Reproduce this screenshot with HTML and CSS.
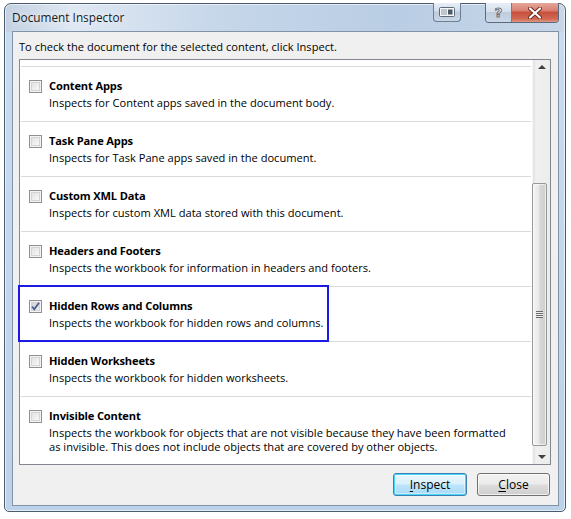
FILE: index.html
```html
<!DOCTYPE html>
<html>
<head>
<meta charset="utf-8">
<link rel="stylesheet" href="styles.css">
</head>
<body>
<div class="window">
  <div class="titlebar">
    <div class="title">Document Inspector</div>
    <div class="tb-btn tb-mode">
      <svg width="16" height="10" viewBox="0 0 16 10">
        <rect x="0.5" y="0.5" width="15" height="9" rx="1" fill="#f4f6f8" stroke="#5f6b78"/>
        <line x1="3" y1="2" x2="3" y2="8" stroke="#8a95a2"/>
        <line x1="5" y1="2" x2="5" y2="8" stroke="#8a95a2"/>
        <line x1="7" y1="2" x2="7" y2="8" stroke="#8a95a2"/>
        <rect x="9" y="2.5" width="4.5" height="5" fill="#4d5866"/>
      </svg>
    </div>
    <div class="tb-group">
      <div class="tb-btn tb-help">?</div>
      <div class="tb-btn tb-close">
        <svg width="14" height="12" viewBox="0 0 14 12">
          <path d="M2 1.5 L12 10.5 M12 1.5 L2 10.5" stroke="#6b2a22" stroke-width="4" stroke-linecap="round"/>
          <path d="M2 1.5 L12 10.5 M12 1.5 L2 10.5" stroke="#ffffff" stroke-width="2.2" stroke-linecap="round"/>
        </svg>
      </div>
    </div>
  </div>
  <div class="client">
    <div class="intro">To check the document for the selected content, click Inspect.</div>
    <div class="listbox">
      <div class="list-content">
        <div class="item">
          <span class="cb"></span>
          <span class="it-title">Content Apps</span>
          <span class="it-desc">Inspects for Content apps saved in the document body.</span>
        </div>
        <div class="item">
          <span class="cb"></span>
          <span class="it-title">Task Pane Apps</span>
          <span class="it-desc">Inspects for Task Pane apps saved in the document.</span>
        </div>
        <div class="item">
          <span class="cb"></span>
          <span class="it-title">Custom XML Data</span>
          <span class="it-desc">Inspects for custom XML data stored with this document.</span>
        </div>
        <div class="item">
          <span class="cb"></span>
          <span class="it-title">Headers and Footers</span>
          <span class="it-desc">Inspects the workbook for information in headers and footers.</span>
        </div>
        <div class="item">
          <span class="cb checked">
            <svg width="11" height="11" viewBox="0 0 11 11"><path d="M2 5.5 L4.3 8.3 L9 1.8" fill="none" stroke="#4a5d8c" stroke-width="1.8"/></svg>
          </span>
          <span class="it-title">Hidden Rows and Columns</span>
          <span class="it-desc">Inspects the workbook for hidden rows and columns.</span>
        </div>
        <div class="item">
          <span class="cb"></span>
          <span class="it-title">Hidden Worksheets</span>
          <span class="it-desc">Inspects the workbook for hidden worksheets.</span>
        </div>
        <div class="item">
          <span class="cb"></span>
          <span class="it-title">Invisible Content</span>
          <span class="it-desc">Inspects the workbook for objects that are not visible because they have been formatted as invisible. This does not include objects that are covered by other objects.</span>
        </div>
      </div>
      <div class="scrollbar">
        <div class="sb-btn"><span class="arrow-up"></span></div>
        <div class="sb-track">
          <div class="sb-thumb">
            <span class="grip"></span>
          </div>
        </div>
        <div class="sb-btn"><span class="arrow-down"></span></div>
      </div>
      <div class="highlight"></div>
    </div>
    <div class="buttons">
      <div class="btn default"><u>I</u>nspect</div>
      <div class="btn"><u>C</u>lose</div>
    </div>
  </div>
</div>
</body>
</html>
```
FILE: styles.css
```css
html, body {
  margin: 0;
  padding: 0;
  background: #ffffff;
}
body {
  font-family: "Open Sans", "Noto Sans", "DejaVu Sans", sans-serif;
  font-size: 11.1px;
  color: #000;
}
.window {
  margin: 3px 0 0 4px;
  width: 562px;
  height: 509px;
  box-sizing: border-box;
  border: 1px solid #4b5a6e;
  border-radius: 7px 7px 5px 5px;
  padding: 0 6px 5px 7px;
  background:
    linear-gradient(180deg, rgba(255,255,255,0) 0px, rgba(255,255,255,0) 28px, #c9dbef 28px, #bcd2ea 100%),
    linear-gradient(90deg, #c3d1e2 0%, #dfe8f3 12%, #c5d6e9 40%, #b9cde4 70%, #c8d7e8 100%);
  display: flex;
  flex-direction: column;
  box-shadow: inset 0 0 0 1px rgba(255,255,255,0.6);
}
.titlebar {
  height: 27px;
  display: flex;
  align-items: flex-start;
  flex-shrink: 0;
}
.title {
  flex: 1;
  padding-top: 5px;
  font-size: 11.8px;
  line-height: 16px;
  color: #1a1a1a;
  text-shadow: 0 0 6px rgba(255,255,255,0.9);
}
.tb-btn {
  height: 19px;
  box-sizing: border-box;
  display: flex;
  align-items: center;
  justify-content: center;
  margin-top: -1px;
}
.tb-mode {
  width: 28px;
  border: 1px solid #6d7d92;
  border-top: none;
  border-radius: 0 0 4px 4px;
  background: linear-gradient(180deg, #e7eef7 0%, #d3deec 45%, #bccbdd 50%, #c8d6e6 100%);
  margin-right: 24px;
}
.tb-group {
  display: flex;
  border: 1px solid #5b6b7f;
  border-top: none;
  border-radius: 0 0 4px 4px;
  overflow: hidden;
  margin-top: -1px;
  height: 20px;
  box-sizing: border-box;
}
.tb-help {
  width: 26px;
  margin-top: 0;
  height: 19px;
  background: linear-gradient(180deg, #e8eef6 0%, #d6e0ec 45%, #bfcddd 50%, #cad7e6 100%);
  border-right: 1px solid #6f7f92;
  font-family: "DejaVu Sans", sans-serif;
  font-size: 13px;
  color: #f4f6f8;
  -webkit-text-stroke: 1px #6a7480;
  font-weight: bold;
  line-height: 19px;
}
.tb-close {
  width: 46px;
  margin-top: 0;
  height: 19px;
  background: linear-gradient(180deg, #e5a89c 0%, #d8806f 40%, #c7503c 50%, #d26a55 85%, #e09a82 100%);
}
.client {
  flex: 1;
  border: 1px solid #8293a8;
  background: #f0f0f0;
  padding: 7px 7px 8px 6px;
  display: flex;
  flex-direction: column;
}
.intro {
  line-height: 15px;
  margin-bottom: 5px;
}
.listbox {
  position: relative;
  height: 406px;
  box-sizing: border-box;
  border: 1px solid #828790;
  background: #ffffff;
  display: flex;
}
.list-content {
  flex: 1;
  overflow: hidden;
  padding-top: 6px;
}
.item {
  margin: 0 1px;
  border-top: 1px solid #dadada;
  padding: 11px 0 11px 8px;
  display: grid;
  grid-template-columns: 13px 1fr;
  column-gap: 7px;
  row-gap: 3px;
  align-items: center;
}
.cb {
  width: 13px;
  height: 13px;
  box-sizing: border-box;
  border: 1px solid #8e8f8f;
  background: linear-gradient(135deg, #dcdcdc 0%, #f4f4f4 70%, #ffffff 100%);
  box-shadow: inset 0 0 0 1px #f4f4f4, inset 0 0 0 2px #d4d4d4;
  display: flex;
  align-items: center;
  justify-content: center;
  margin-top: 1px;
}
.cb.checked {
  background: linear-gradient(135deg, #c9cbd0 0%, #e9eaee 70%, #f5f5f7 100%);
}
.it-title {
  font-weight: bold;
  line-height: 15px;
  letter-spacing: -0.15px;
}
.it-desc {
  grid-column: 2;
  line-height: 14px;
  padding-right: 20px;
}
.scrollbar {
  width: 17px;
  flex-shrink: 0;
  display: flex;
  flex-direction: column;
  background: linear-gradient(90deg, #e3e3e3 0%, #f0f0f0 20%, #ececec 100%);
  border-left: 1px solid #f4f4f4;
}
.sb-btn {
  height: 17px;
  display: flex;
  align-items: center;
  justify-content: center;
  flex-shrink: 0;
}
.arrow-up {
  width: 0;
  height: 0;
  border-left: 4px solid transparent;
  border-right: 4px solid transparent;
  border-bottom: 4px solid #404040;
  margin-top: -3px;
}
.arrow-down {
  width: 0;
  height: 0;
  border-left: 4px solid transparent;
  border-right: 4px solid transparent;
  border-top: 4px solid #404040;
  margin-top: 2px;
}
.sb-track {
  flex: 1;
  padding-top: 106px;
}
.sb-thumb {
  width: 15px;
  height: 263px;
  box-sizing: border-box;
  border: 1px solid #979797;
  border-radius: 2px;
  background: linear-gradient(90deg, #f4f4f4 0%, #e8e8e8 45%, #d6d6d6 55%, #cfcfcf 100%);
  box-shadow: inset 0 0 0 1px rgba(255,255,255,0.6);
  display: flex;
  align-items: center;
  justify-content: center;
  margin-left: -1px;
}
.grip {
  width: 7px;
  height: 7px;
  background: repeating-linear-gradient(180deg, #6a6a6a 0, #6a6a6a 1px, #eeeeee 1px, #eeeeee 2px);
}
.highlight {
  position: absolute;
  left: -2px;
  top: 225px;
  width: 311px;
  height: 57px;
  box-sizing: border-box;
  border: 2px solid #1a1ae4;
  pointer-events: none;
}
.buttons {
  display: flex;
  justify-content: flex-end;
  gap: 10px;
  margin-top: 8px;
  padding-right: 1px;
}
.btn {
  width: 73px;
  height: 23px;
  box-sizing: border-box;
  border: 1px solid #707070;
  border-radius: 3px;
  background: linear-gradient(180deg, #f2f2f2 0%, #ebebeb 49%, #dddddd 51%, #cfcfcf 100%);
  box-shadow: inset 0 0 0 1px rgba(255,255,255,0.7);
  display: flex;
  align-items: center;
  justify-content: center;
  font-size: 12px;
}
.btn.default {
  width: 74px;
  border-color: #3c7fb1;
  box-shadow: inset 0 0 0 1px #48d7fa, inset 0 0 0 2px rgba(255,255,255,0.4);
  background: linear-gradient(180deg, #eaf6fd 0%, #d9f0fc 49%, #bee6fd 51%, #a7d9f5 100%);
}
.btn u {
  text-decoration: underline;
  text-underline-offset: 2px;
}
```
